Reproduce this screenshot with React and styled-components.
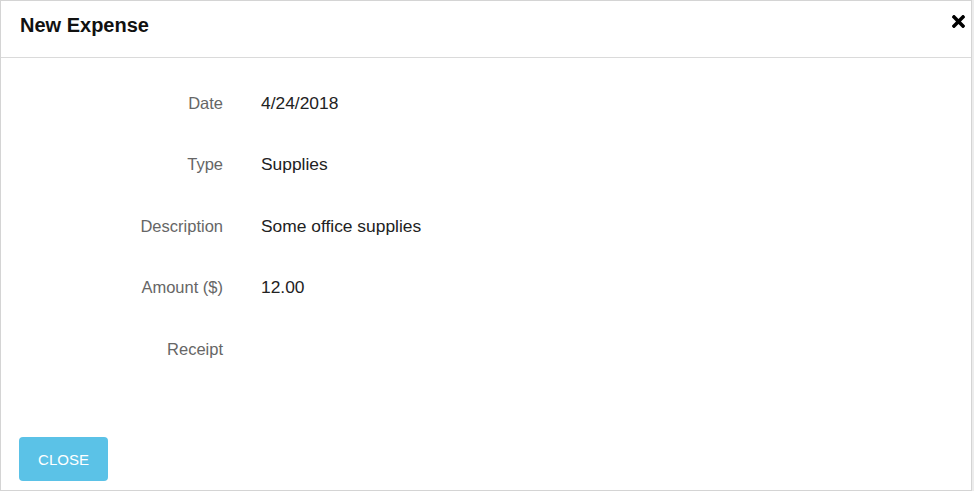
import styled, { createGlobalStyle } from 'styled-components'
import { Fragment } from 'react'
import { FaTimes } from 'react-icons/fa'

const GlobalStyle = createGlobalStyle`
  body {
    margin: 0;
    background: #fff;
    font-family: "Liberation Sans", Arial, sans-serif;
  }
`

const Dialog = styled.div`
  display: flex;
  flex-direction: column;
  box-sizing: border-box;
  width: 972px;
  height: 491px;
  border: 1px solid #d4d4d4;
  box-shadow: 2px 0 0 #ececec;
  background: #fff;
`

const Header = styled.div`
  display: flex;
  align-items: flex-start;
  justify-content: space-between;
  box-sizing: border-box;
  height: 57px;
  padding: 12px 3px 0 19px;
  border-bottom: 1px solid #dadada;
`

const Title = styled.h1`
  margin: 0;
  font-size: 20px;
  line-height: 24px;
  font-weight: 700;
  color: #111;
`

const CloseIcon = styled.button`
  display: flex;
  margin: -1px 0 0;
  padding: 0;
  border: 0;
  background: none;
  color: #000;
  cursor: pointer;
`

const Body = styled.div`
  flex: 1;
  display: grid;
  grid-template-columns: 222px 1fr;
  grid-auto-rows: 61.5px;
  column-gap: 38px;
  align-content: start;
  padding-top: 14px;
`

const Label = styled.div`
  align-self: center;
  text-align: right;
  font-size: 16.5px;
  line-height: 20px;
  color: #666;
`

const Value = styled.div`
  align-self: center;
  font-size: 17.4px;
  line-height: 20px;
  color: #222;
`

const Footer = styled.div`
  display: flex;
  padding: 0 18px 9px;
`

const Button = styled.button`
  width: 89px;
  height: 44px;
  border: 0;
  border-radius: 4px;
  background-color: #5bc2e7;
  color: #fff;
  font-family: inherit;
  font-size: 15px;
  cursor: pointer;
`

const fields = [
  ['Date', '4/24/2018'],
  ['Type', 'Supplies'],
  ['Description', 'Some office supplies'],
  ['Amount ($)', '12.00'],
  ['Receipt', ''],
]

function App() {
  return (
    <>
      <GlobalStyle />
      <Dialog>
        <Header>
          <Title>New Expense</Title>
          <CloseIcon aria-label="Close">
            <FaTimes size={19} />
          </CloseIcon>
        </Header>
        <Body>
          {fields.map(([label, value]) => (
            <Fragment key={label}>
              <Label>{label}</Label>
              <Value>{value}</Value>
            </Fragment>
          ))}
        </Body>
        <Footer>
          <Button>CLOSE</Button>
        </Footer>
      </Dialog>
    </>
  )
}

export default App
